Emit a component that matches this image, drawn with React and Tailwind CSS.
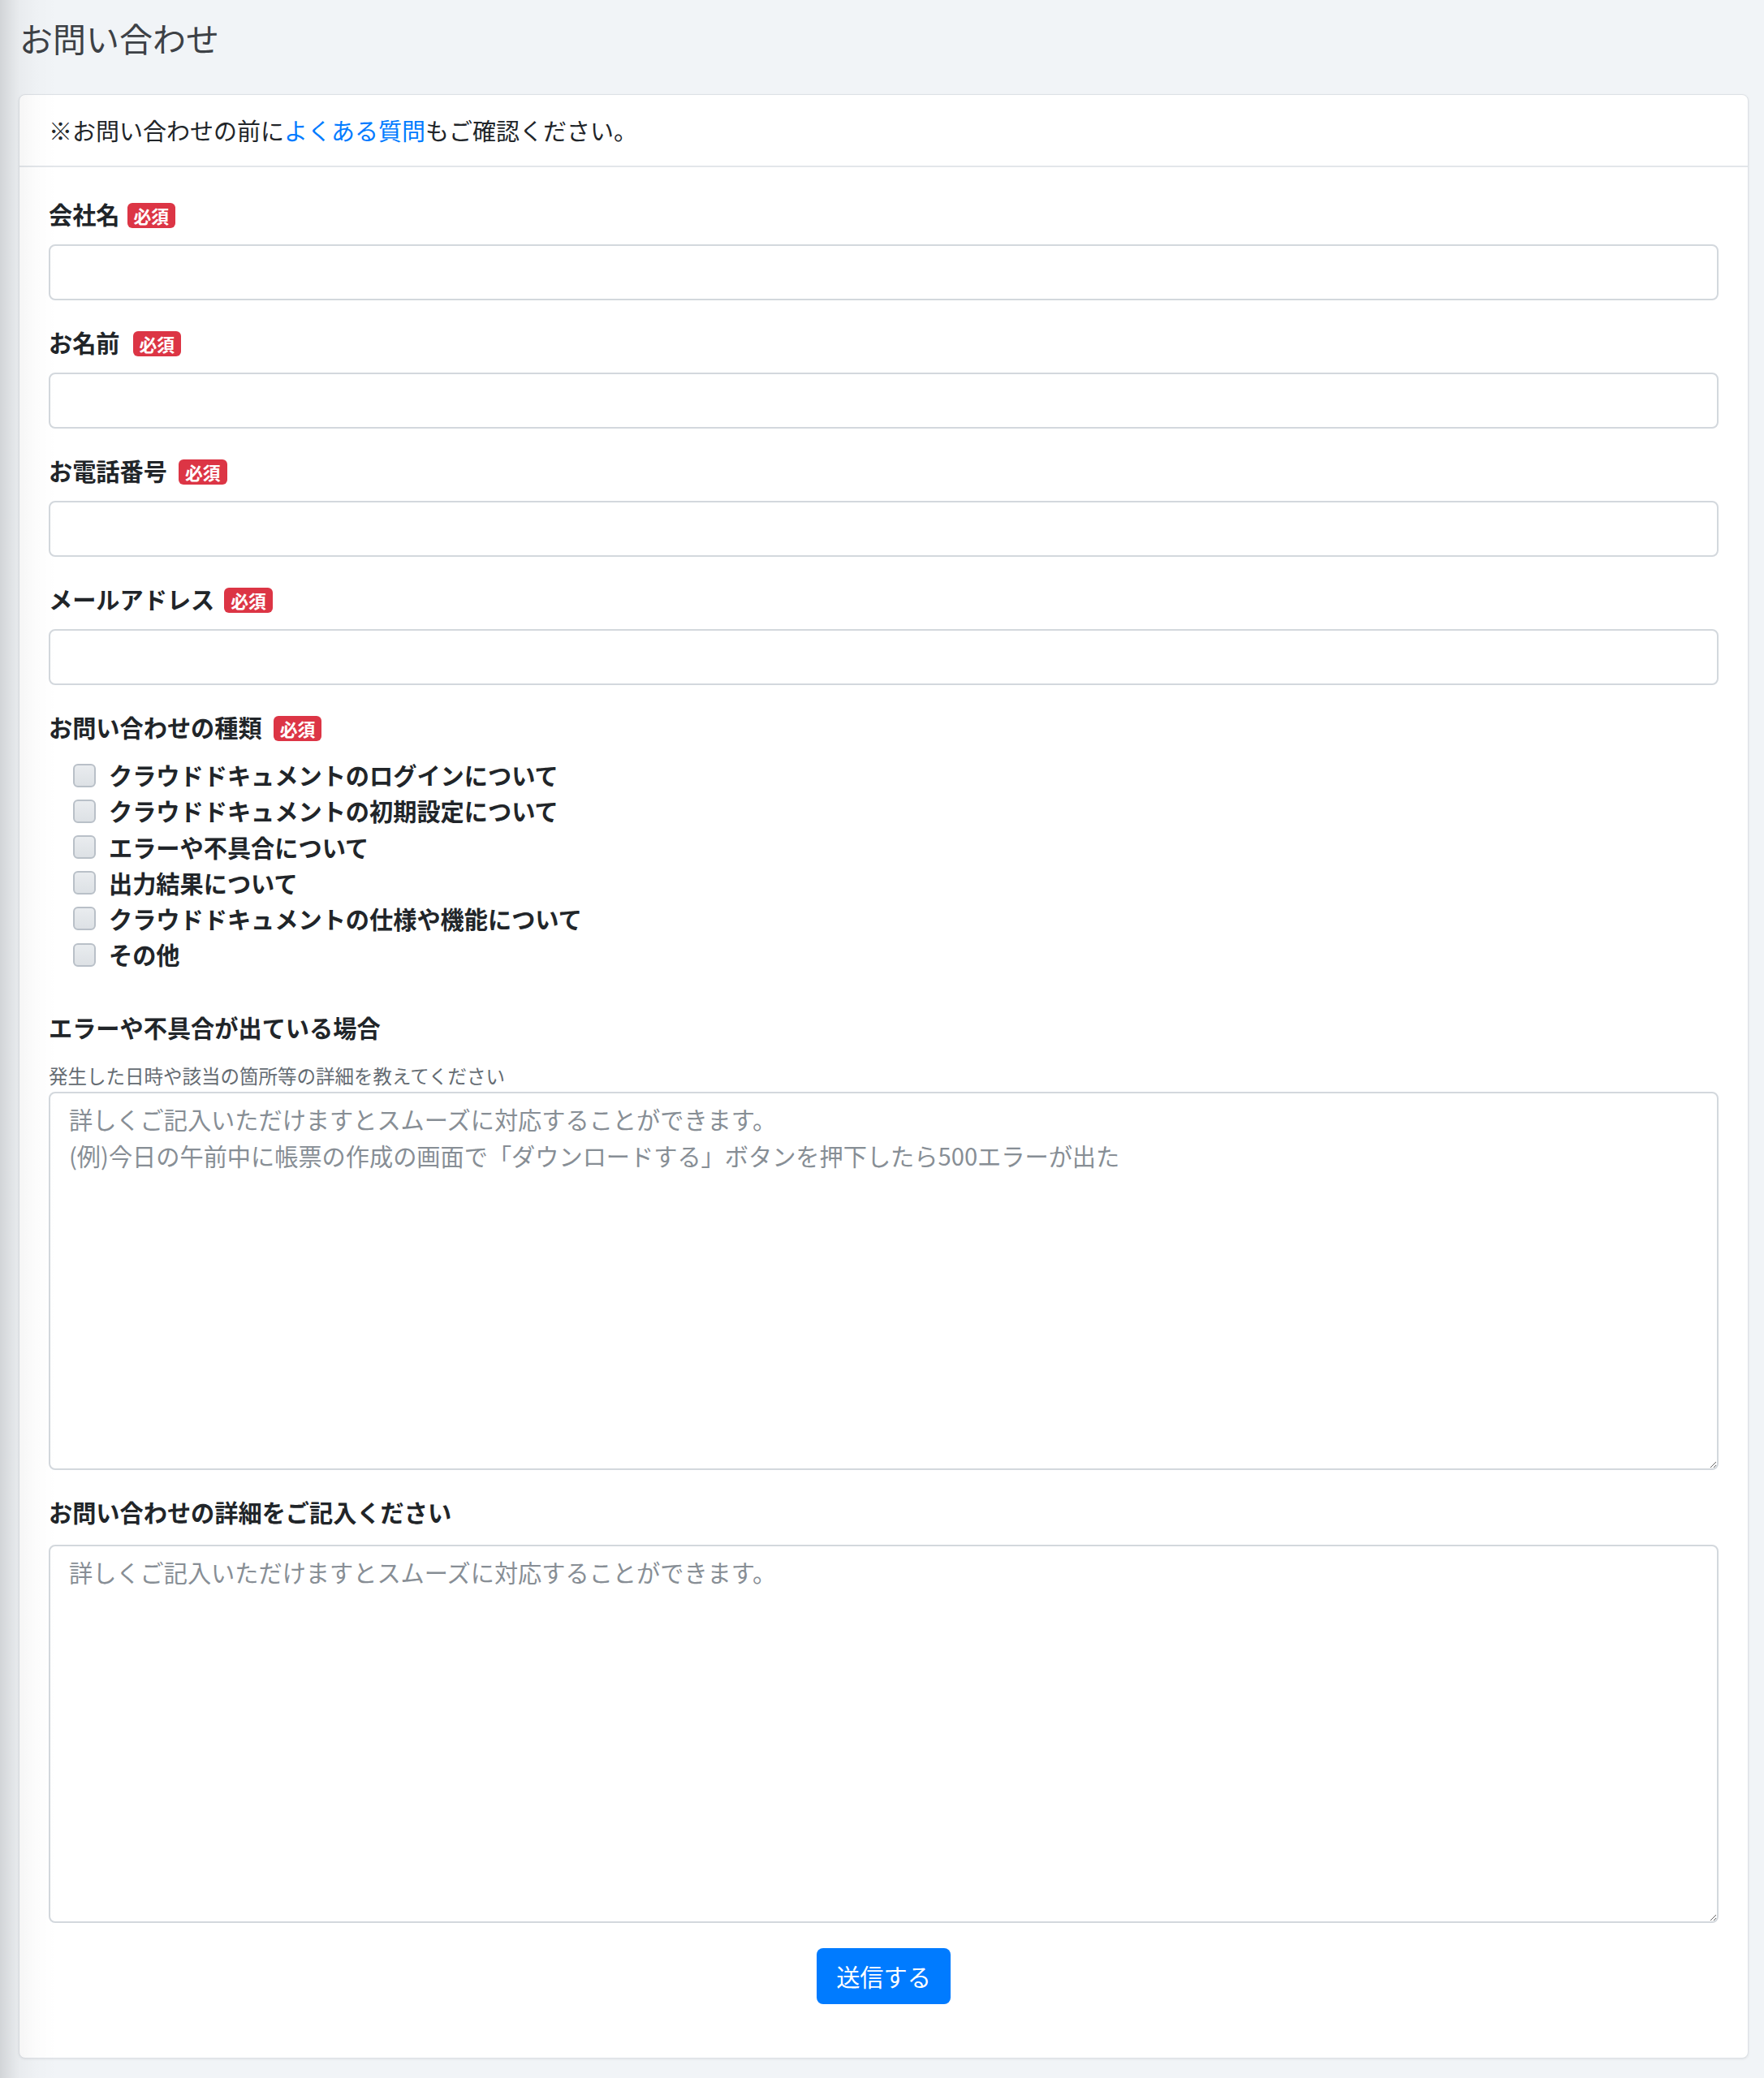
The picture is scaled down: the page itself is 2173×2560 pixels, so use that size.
import React from 'react';

const fields = [
  { label: '会社名', gap: 'ml-[9px]' },
  { label: 'お名前', gap: 'ml-[16px]' },
  { label: 'お電話番号', gap: 'ml-[14px]' },
  { label: 'メールアドレス', gap: 'ml-[12px]' },
];

const kinds = [
  'クラウドドキュメントのログインについて',
  'クラウドドキュメントの初期設定について',
  'エラーや不具合について',
  '出力結果について',
  'クラウドドキュメントの仕様や機能について',
  'その他',
];

function Badge({ className = '' }) {
  return (
    <span className={`inline-flex items-center h-[31px] px-[8px] mt-[4px] rounded-[6px] bg-[#dc3545] text-white text-[21.8px] font-bold leading-none ${className}`}>
      必須
    </span>
  );
}

export default function App() {
  return (
    <div className="relative min-h-screen bg-[#f1f4f7] text-[#212529] font-['Noto_Sans_CJK_JP','Noto_Sans',sans-serif]">
      {/* shadow cast by the sidebar on the left */}
      <div className="pointer-events-none absolute inset-y-0 left-0 w-[70px] z-10 bg-[linear-gradient(to_right,rgba(0,0,0,0.13),rgba(0,0,0,0.07)_14px,rgba(0,0,0,0.035)_24px,rgba(0,0,0,0.012)_45px,transparent_70px)]" />

      <div className="pl-[23px] pr-[19px] pt-[22px] pb-[24px]">
        <h1 className="pl-[1px] text-[41px] leading-[48px] font-normal text-[#3d4146]">お問い合わせ</h1>

        <div className="mt-[46px] bg-white border border-[#dde1e6] rounded-[8px] shadow-[0_1px_3px_rgba(0,0,0,0.08)]">
          <div className="px-[36px] py-[22px] border-b-2 border-[#e3e6ea] text-[29px] leading-[43px]">
            ※お問い合わせの前に<a href="#" className="text-[#007bff]">よくある質問</a>もご確認ください。
          </div>

          <form className="px-[36px] pt-[36px] pb-[66px]" onSubmit={(e) => e.preventDefault()}>
            {fields.map((f) => (
              <div key={f.label} className="mb-[30px]">
                <label className="flex items-center h-[43px] mb-[16px] text-[29.2px] font-bold">
                  {f.label}
                  <Badge className={f.gap} />
                </label>
                <input
                  type="text"
                  className="block w-full h-[69px] px-[24px] rounded-[8px] border-2 border-[#d3d8dd] bg-white text-[29px] outline-none"
                />
              </div>
            ))}

            <div className="mb-[46px]">
              <label className="flex items-center h-[43px] mb-[16px] text-[29.2px] font-bold">
                お問い合わせの種類
                <Badge className="ml-[14px]" />
              </label>
              <div className="pl-[30px] flex flex-col">
                {kinds.map((k) => (
                  <label key={k} className="flex items-center h-[44.2px] gap-[16px] text-[29.2px] font-bold">
                    <input
                      type="checkbox"
                      className="appearance-none shrink-0 w-[28px] h-[29px] rounded-[6px] border-2 border-[#b9c0c8] bg-[linear-gradient(to_bottom,#e9ecef,#dde1e5)]"
                    />
                    <span>{k}</span>
                  </label>
                ))}
              </div>
            </div>

            <div className="mb-[30px]">
              <label className="flex items-center h-[43px] mb-[21px] text-[29.2px] font-bold">
                エラーや不具合が出ている場合
              </label>
              <p className="text-[23.5px] leading-[34px] mb-[3px] text-[#656c73]">
                発生した日時や該当の箇所等の詳細を教えてください
              </p>
              <textarea
                className="block w-full h-[466px] px-[23px] pt-[9px] rounded-[8px] border-2 border-[#d3d8dd] text-[29.2px] leading-[45px] outline-none placeholder:text-[#878e95]"
                placeholder={'詳しくご記入いただけますとスムーズに対応することができます。\n(例)今日の午前中に帳票の作成の画面で「ダウンロードする」ボタンを押下したら500エラーが出た'}
              />
            </div>

            <div className="mb-[31px]">
              <label className="flex items-center h-[43px] mb-[19px] text-[29.2px] font-bold">
                お問い合わせの詳細をご記入ください
              </label>
              <textarea
                className="block w-full h-[466px] px-[23px] pt-[9px] rounded-[8px] border-2 border-[#d3d8dd] text-[29.2px] leading-[45px] outline-none placeholder:text-[#878e95]"
                placeholder="詳しくご記入いただけますとスムーズに対応することができます。"
              />
            </div>

            <div className="flex justify-center">
              <button
                type="submit"
                className="h-[69px] px-[24px] rounded-[8px] bg-[#007bff] text-white text-[29.2px] leading-[43px]"
              >
                送信する
              </button>
            </div>
          </form>
        </div>
      </div>
    </div>
  );
}
